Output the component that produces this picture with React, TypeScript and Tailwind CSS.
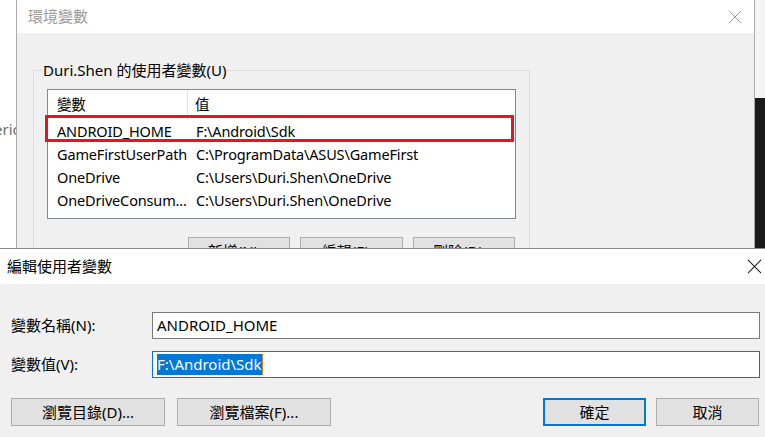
import React from "react";

const font = { fontFamily: '"Noto Sans", "Noto Sans CJK TC", sans-serif' };

function CloseX({ color, size = 16 }: { color: string; size?: number }) {
  return (
    <svg width={size} height={size} viewBox="0 0 16 16">
      <path d="M1 1 L15 15 M15 1 L1 15" stroke={color} strokeWidth="1.1" fill="none" />
    </svg>
  );
}

function Chevron({ up }: { up?: boolean }) {
  return (
    <svg width="10" height="7" viewBox="0 0 10 7">
      <path
        d={up ? "M1 6 L5 2 L9 6" : "M1 1 L5 5 L9 1"}
        stroke="#606060"
        strokeWidth="1.8"
        fill="none"
      />
    </svg>
  );
}

const rows = [
  ["ANDROID_HOME", "F:\\Android\\Sdk"],
  ["GameFirstUserPath", "C:\\ProgramData\\ASUS\\GameFirst"],
  ["OneDrive", "C:\\Users\\Duri.Shen\\OneDrive"],
  ["OneDriveConsum...", "C:\\Users\\Duri.Shen\\OneDrive"],
  ["Path", "C:\\Users\\Duri.Shen\\AppData\\Local\\Microsoft\\WindowsApps;"],
];

function WinButton({
  label,
  w,
  primary,
}: {
  label: string;
  w: string;
  primary?: boolean;
}) {
  return (
    <div
      className={`${w} h-[28px] shrink-0 flex items-center justify-center bg-[#e1e1e1] text-[15px] text-black ${
        primary ? "border-2 border-[#0078d7]" : "border border-[#adadad]"
      }`}
    >
      {label}
    </div>
  );
}

export default function App() {
  return (
    <div
      className="relative w-[765px] h-[437px] overflow-hidden bg-white text-black"
      style={font}
    >
      {/* stray text on left */}
      <div className="absolute left-[-6px] top-[118px] text-[15px] text-[#6d6d6d]">eric</div>

      {/* right dark region */}
      <div className="absolute right-0 top-[98px] bottom-0 w-[11px] bg-[#1b1b1b]" />
      <div className="absolute right-0 top-0 h-[98px] w-[11px] bg-[#f4f4f4]" />

      {/* background window */}
      <div className="absolute left-[16px] top-0 w-[739px] h-[260px] flex flex-col border-l border-r border-[#aaaaaa] bg-[#f0f0f0]">
        <div className="h-[33px] shrink-0 bg-white flex items-center justify-between pl-[11px] pr-[12px]">
          <span className="text-[15px] text-[#9a9a9a]">環境變數</span>
          <CloseX color="#9a9a9a" size={14} />
        </div>
        <div className="flex-1 pl-[16px] pt-[37px]">
          <div className="relative w-[497px] h-[260px] border border-[#dcdcdc] pl-[13px] pt-[18px]">
            <div className="absolute left-[8px] top-[-11px] px-px bg-[#f0f0f0] text-[15px] leading-[20px]">
              Duri.Shen 的使用者變數(U)
            </div>
            <div className="w-[469px] h-[130px] border border-[#828790] bg-white flex overflow-hidden">
              <div className="flex-1 flex flex-col text-[14.5px] tracking-[-0.15px]">
                <div className="h-[30px] flex shrink-0">
                  <div className="w-[140px] pl-[9px] border-r border-[#e5e5e5] flex items-center">
                    變數
                  </div>
                  <div className="flex-1 pl-[7px] flex items-center">值</div>
                </div>
                {rows.map(([k, v]) => (
                  <div key={k} className="h-[23px] shrink-0 flex leading-[23px] whitespace-nowrap">
                    <div className="w-[140px] pl-[9px] overflow-hidden">{k}</div>
                    <div className="flex-1 pl-[8px] overflow-hidden">{v}</div>
                  </div>
                ))}
              </div>
              <div className="w-[21px] shrink-0 bg-[#f0f0f0] flex flex-col items-center">
                <div className="h-[26px] flex items-center justify-center">
                  <Chevron up />
                </div>
                <div className="w-[19px] h-[44px] bg-[#cdcdcd]" />
                <div className="flex-1" />
                <div className="h-[24px] flex items-center justify-center">
                  <Chevron />
                </div>
              </div>
            </div>
            <div className="flex justify-end gap-[10px] mt-[18px] pr-[14px]">
              <WinButton label="新增(N)..." w="w-[102px]" />
              <WinButton label="編輯(E)..." w="w-[103px]" />
              <WinButton label="刪除(D)..." w="w-[102px]" />
            </div>
          </div>
        </div>
      </div>

      {/* red highlight box */}
      <div className="absolute left-[45px] top-[115px] w-[469px] h-[27px] border-[3px] border-[#e8131f]" />

      {/* foreground dialog */}
      <div className="absolute left-0 top-[248px] w-[765px] h-[189px] flex flex-col border-t border-[#8a8a8a] bg-[#f0f0f0]">
        <div className="h-[35px] bg-white flex items-center justify-between pl-[7px] pr-[3px] shrink-0">
          <span className="text-[15px]">編輯使用者變數</span>
          <CloseX color="#1a1a1a" size={15} />
        </div>
        <div className="flex flex-col pl-[11px] pt-[28px]">
          <div className="flex items-center h-[27px]">
            <div className="w-[141px] text-[15px]">變數名稱(N):</div>
            <div className="w-[608px] h-[27px] border border-[#7a7a7a] bg-white flex items-center pl-[4px] text-[15px]">
              ANDROID_HOME
            </div>
          </div>
          <div className="flex items-center h-[27px] mt-[12px]">
            <div className="w-[141px] text-[15px]">變數值(V):</div>
            <div className="w-[608px] h-[27px] border border-[#0078d7] bg-white flex items-center pl-[4px] text-[15px]">
              <span className="bg-[#0078d7] text-white leading-[21px]">F:\Android\Sdk</span>
              <span className="w-px h-[21px] bg-[#e07a1f]" />
            </div>
          </div>
          <div className="flex items-center mt-[20px]">
            <WinButton label="瀏覽目錄(D)..." w="w-[154px]" />
            <div className="w-[12px]" />
            <WinButton label="瀏覽檔案(F)..." w="w-[154px]" />
            <div className="flex-1" />
            <WinButton label="確定" w="w-[103px]" primary />
            <div className="w-[10px]" />
            <WinButton label="取消" w="w-[103px]" />
            <div className="w-[6px]" />
          </div>
        </div>
      </div>
    </div>
  );
}
